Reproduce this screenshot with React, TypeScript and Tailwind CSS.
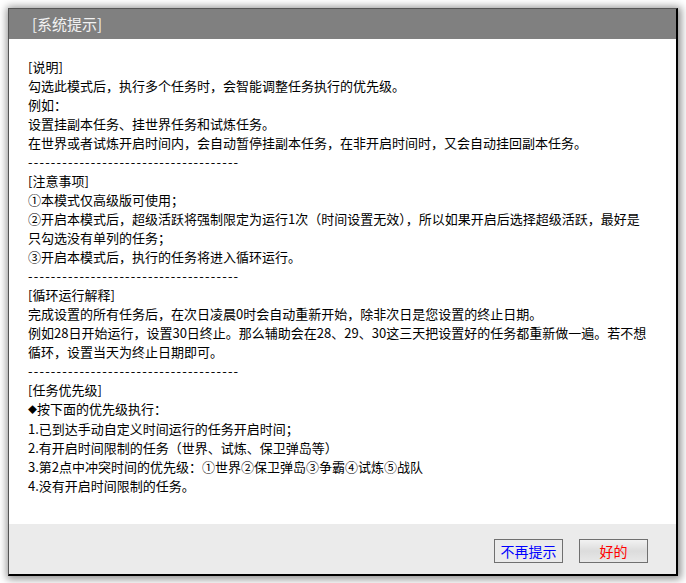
import React from "react";

// Dialog body, one entry per rendered line
const dash = "-------------------------------------";
const lines: React.ReactNode[] = [
  "[说明]",
  "勾选此模式后，执行多个任务时，会智能调整任务执行的优先级。",
  "例如：",
  "设置挂副本任务、挂世界任务和试炼任务。",
  "在世界或者试炼开启时间内，会自动暂停挂副本任务，在非开启时间时，又会自动挂回副本任务。",
  dash,
  "[注意事项]",
  "①本模式仅高级版可使用；",
  "②开启本模式后，超级活跃将强制限定为运行1次（时间设置无效），所以如果开启后选择超级活跃，最好是",
  "只勾选没有单列的任务；",
  "③开启本模式后，执行的任务将进入循环运行。",
  dash,
  "[循环运行解释]",
  "完成设置的所有任务后，在次日凌晨0时会自动重新开始，除非次日是您设置的终止日期。",
  "例如28日开始运行，设置30日终止。那么辅助会在28、29、30这三天把设置好的任务都重新做一遍。若不想",
  "循环，设置当天为终止日期即可。",
  dash,
  "[任务优先级]",
  <><span className="text-[9px] align-[1px]">◆</span>按下面的优先级执行：</>,
  "1.已到达手动自定义时间运行的任务开启时间；",
  "2.有开启时间限制的任务（世界、试炼、保卫弹岛等）",
  "3.第2点中冲突时间的优先级：①世界②保卫弹岛③争霸④试炼⑤战队",
  "4.没有开启时间限制的任务。",
];

export default function App() {
  return (
    <div className="w-[686px] h-[583px] bg-white pt-2 pl-2 font-['Noto_Sans_CJK_SC',sans-serif]">
      <div className="w-[670px] h-[568px] flex flex-col border-l border-t border-[#555] border-r-2 border-b-2 border-r-black border-b-black shadow-[1px_1px_8px_2px_rgba(0,0,0,0.45)]">
        {/* Title bar */}
        <div className="h-[30px] shrink-0 bg-[#808080] flex items-center pl-[23px] text-[15px] text-[#f2f2f2]">
          [系统提示]
        </div>

        {/* Message */}
        <div className="flex-1 bg-white pt-[18px] pl-[19px] text-[13px] leading-[19px] text-black">
          {lines.map((line, i) => (
            <div
              key={i}
              className={line === dash ? "whitespace-nowrap tracking-[1.2px]" : "whitespace-nowrap"}
            >
              {line}
            </div>
          ))}
        </div>

        {/* Footer */}
        <div className="h-[50px] shrink-0 bg-[#ebebeb] flex items-start justify-end gap-4 pt-[15px] pr-[28px]">
          <button className="w-[69px] h-[24px] border border-[#707070] bg-[#ebebeb] text-[14px] leading-none text-[#0000ff]">
            不再提示
          </button>
          <button className="w-[69px] h-[24px] border border-[#707070] bg-gradient-to-b from-[#f2f2f2] via-[#dcdcdc] to-[#e8e8e8] text-[14px] leading-none text-[#ff0000]">
            好的
          </button>
        </div>
      </div>
    </div>
  );
}
